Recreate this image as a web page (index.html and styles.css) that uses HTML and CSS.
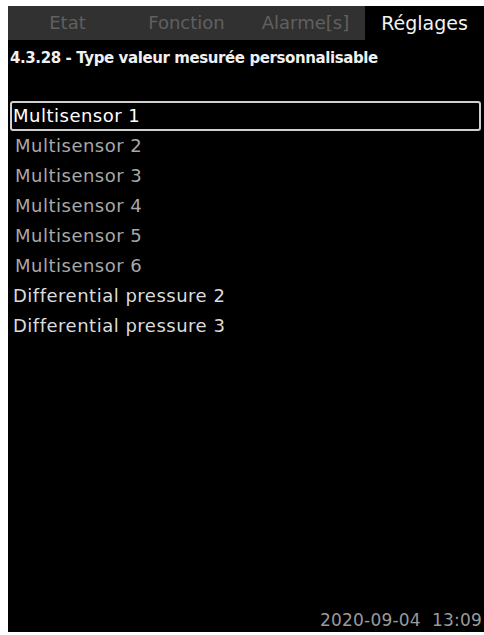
FILE: index.html
```html
<!DOCTYPE html>
<html lang="fr">
<head>
    <meta charset="UTF-8">
    <title>Réglages</title>
    <link rel="stylesheet" href="styles.css">
</head>
<body>
    <div class="screen">
        <div class="tabs">
            <div class="tab">Etat</div>
            <div class="tab">Fonction</div>
            <div class="tab">Alarme[s]</div>
            <div class="tab active">Réglages</div>
        </div>

        <div class="title">4.3.28 - Type valeur mesurée personnalisable</div>

        <ul class="list">
            <li class="item selected">Multisensor 1</li>
            <li class="item dim">Multisensor 2</li>
            <li class="item dim">Multisensor 3</li>
            <li class="item dim">Multisensor 4</li>
            <li class="item dim">Multisensor 5</li>
            <li class="item dim">Multisensor 6</li>
            <li class="item">Differential pressure 2</li>
            <li class="item">Differential pressure 3</li>
        </ul>

        <div class="footer">2020-09-04&nbsp;&nbsp;13:09</div>
    </div>
</body>
</html>
```

FILE: styles.css
```css
* {
    margin: 0;
    padding: 0;
    box-sizing: border-box;
}

body {
    background: #fff;
    font-family: 'DejaVu Sans', sans-serif;
    padding: 6px 0 3px 8px;
    height: 635px;
}

.screen {
    background: #000;
    height: 626px;
    display: flex;
    flex-direction: column;
}

.tabs {
    display: flex;
    height: 34px;
    background: #313131;
}

.tab {
    flex: 1;
    text-align: center;
    color: #606060;
    font-size: 18px;
    line-height: 34px;
}

.tab.active {
    background: #000;
    color: #f2f2f2;
    font-size: 19px;
}

.title {
    color: #f0f0f0;
    font-size: 15px;
    font-weight: bold;
    letter-spacing: -0.4px;
    padding: 9px 0 0 2px;
    height: 38px;
}

.list {
    list-style: none;
    padding: 23px 3px 0 2px;
}

.item {
    height: 30px;
    line-height: 26px;
    font-size: 18px;
    letter-spacing: 0.5px;
    color: #dcdcdc;
    padding-left: 1px;
    border: 2px solid transparent;
}

.item.selected {
    color: #fff;
    border-color: #d0d0d0;
    border-radius: 3px;
}

.item.dim {
    color: #a8a8a8;
    padding-left: 3px;
}

.footer {
    margin-top: auto;
    text-align: right;
    color: #9a9a9a;
    font-size: 17px;
    letter-spacing: 0.2px;
    padding: 0 2px 2px 0;
}
```
